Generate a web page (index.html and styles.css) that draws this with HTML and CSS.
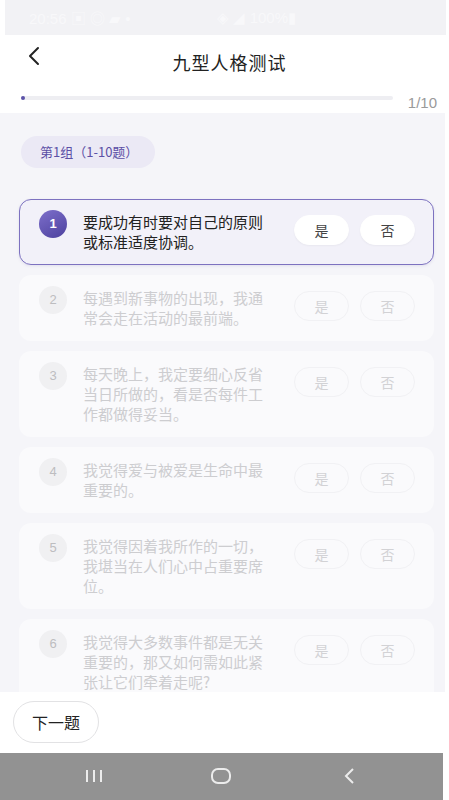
FILE: index.html
```html
<!DOCTYPE html>
<html lang="zh-CN">
<head>
    <meta charset="UTF-8" />
    <meta name="viewport" content="width=device-width, initial-scale=1.0" />
    <title>九型人格测试</title>
    <link rel="stylesheet" href="styles.css">
</head>
<body>
    <div class="status-bar">
        <span class="status-left">20:56 ▣ ◎ ▰ •</span>
        <span class="status-right">◈ ◢ 100%▮</span>
    </div>

    <div class="header">
        <svg class="back" width="14" height="20" viewBox="0 0 14 20">
            <path d="M11 2 L3 10 L11 18" fill="none" stroke="#222" stroke-width="2" stroke-linecap="round" stroke-linejoin="round"/>
        </svg>
        <h1>九型人格测试</h1>
    </div>

    <div class="progress-row">
        <div class="progress-track">
            <div class="progress-fill" style="width: 1%;"></div>
        </div>
        <span class="progress-text">1/10</span>
    </div>

    <div class="content">
        <div class="group-tag">第1组（1-10题）</div>

        <div class="question-list">
            <div class="q-card active">
                <div class="q-num">1</div>
                <div class="q-text">要成功有时要对自己的原则或标准适度协调。</div>
                <div class="q-answers">
                    <button class="ans">是</button>
                    <button class="ans">否</button>
                </div>
            </div>
            <div class="q-card">
                <div class="q-num">2</div>
                <div class="q-text">每遇到新事物的出现，我通常会走在活动的最前端。</div>
                <div class="q-answers">
                    <button class="ans">是</button>
                    <button class="ans">否</button>
                </div>
            </div>
            <div class="q-card">
                <div class="q-num">3</div>
                <div class="q-text">每天晚上，我定要细心反省当日所做的，看是否每件工作都做得妥当。</div>
                <div class="q-answers">
                    <button class="ans">是</button>
                    <button class="ans">否</button>
                </div>
            </div>
            <div class="q-card">
                <div class="q-num">4</div>
                <div class="q-text">我觉得爱与被爱是生命中最重要的。</div>
                <div class="q-answers">
                    <button class="ans">是</button>
                    <button class="ans">否</button>
                </div>
            </div>
            <div class="q-card">
                <div class="q-num">5</div>
                <div class="q-text">我觉得因着我所作的一切，我堪当在人们心中占重要席位。</div>
                <div class="q-answers">
                    <button class="ans">是</button>
                    <button class="ans">否</button>
                </div>
            </div>
            <div class="q-card">
                <div class="q-num">6</div>
                <div class="q-text">我觉得大多数事件都是无关重要的，那又如何需如此紧张让它们牵着走呢?</div>
                <div class="q-answers">
                    <button class="ans">是</button>
                    <button class="ans">否</button>
                </div>
            </div>
        </div>
    </div>

    <div class="footer">
        <button class="next-btn">下一题</button>
    </div>

    <div class="nav-bar">
        <svg width="20" height="16" viewBox="0 0 20 16">
            <path d="M3 2 V14 M10 2 V14 M17 2 V14" stroke="#ececec" stroke-width="2"/>
        </svg>
        <svg width="22" height="18" viewBox="0 0 22 18">
            <rect x="2" y="2" width="18" height="14" rx="6" fill="none" stroke="#ececec" stroke-width="2"/>
        </svg>
        <svg width="14" height="18" viewBox="0 0 14 18">
            <path d="M10 2 L3 9 L10 16" fill="none" stroke="#ececec" stroke-width="2"/>
        </svg>
    </div>
</body>
</html>
```

FILE: styles.css
```css
* {
    box-sizing: border-box;
}

body {
    margin: 0;
    width: 449px;
    height: 800px;
    overflow: hidden;
    background-color: #fff;
    font-family: "Noto Sans CJK SC", "Noto Sans", sans-serif;
    color: #222;
}

.status-bar {
    height: 35px;
    margin: 0 3px 0 5px;
    background-color: #f2f2f5;
    display: flex;
    align-items: center;
    justify-content: space-between;
    padding: 0 150px 0 24px;
    font-family: "Liberation Sans", sans-serif;
    font-size: 15px;
    color: #f8f8fa;
}

.header {
    height: 54px;
    position: relative;
    display: flex;
    align-items: center;
    justify-content: center;
}

.header .back {
    position: absolute;
    left: 27px;
    top: 11px;
}

.header h1 {
    margin: 0 0 0 10px;
    font-size: 18px;
    font-weight: 400;
    letter-spacing: 1px;
}

.progress-row {
    height: 24px;
    display: flex;
    align-items: flex-start;
    padding: 7px 12px 0 21px;
}

.progress-track {
    width: 372px;
    height: 4px;
    border-radius: 2px;
    background-color: #eeeef2;
}

.progress-fill {
    height: 100%;
    min-width: 4px;
    border-radius: 2px;
    background-color: #5b52a8;
}

.progress-text {
    margin-left: auto;
    margin-top: -1px;
    font-family: "Liberation Sans", sans-serif;
    font-size: 15px;
    line-height: 16px;
    color: #9a9a9a;
}

.content {
    height: 579px;
    overflow: hidden;
    margin-right: 4px;
    padding: 23px 11px 0 19px;
    background-color: #f5f5f9;
}

.group-tag {
    display: inline-block;
    height: 32px;
    line-height: 32px;
    padding: 0 17px 0 19px;
    margin-left: 2px;
    border-radius: 16px;
    background-color: #ebe9f5;
    color: #5c4fa6;
    font-size: 13px;
}

.question-list {
    margin-top: 31px;
    display: flex;
    flex-direction: column;
    gap: 10px;
}

.q-card {
    display: flex;
    align-items: flex-start;
    padding: 12px 18px 12px 19px;
    border: 1px solid transparent;
    border-radius: 12px;
    background-color: #fafafc;
    color: #cdcdd0;
}

.q-card.active {
    border: 1.5px solid #7d72c0;
    background-color: #f2f1f9;
    color: #222;
    box-shadow: 0 1px 3px rgba(90, 80, 160, 0.12);
}

.q-num {
    flex: none;
    width: 28px;
    height: 28px;
    margin-top: -2px;
    border-radius: 50%;
    background-color: #f0f0f2;
    color: #bdbdc0;
    font-family: "Liberation Sans", sans-serif;
    font-size: 13px;
    line-height: 28px;
    text-align: center;
}

.q-card.active .q-num {
    background: linear-gradient(150deg, #7d6fcb, #4d419e);
    color: #fff;
    font-weight: bold;
}

.q-text {
    width: 181px;
    margin-left: 16px;
    font-size: 15px;
    line-height: 20px;
}

.q-answers {
    margin-left: auto;
    margin-top: 3px;
    display: flex;
    gap: 11px;
}

.ans {
    width: 55px;
    height: 30px;
    border: 1px solid #f1f1f4;
    border-radius: 15px;
    background-color: #fafafc;
    color: #d2d2d5;
    font-family: "Noto Sans CJK SC", sans-serif;
    font-size: 14px;
    padding: 0;
}

.q-card.active .ans {
    border-color: #fff;
    background-color: #fff;
    color: #444;
    box-shadow: 0 1px 2px rgba(0, 0, 0, 0.04);
}

.footer {
    height: 61px;
    padding: 9px 0 0 13px;
    background-color: #fff;
}

.next-btn {
    width: 86px;
    height: 42px;
    border: 1px solid #e2e2e4;
    border-radius: 21px;
    background-color: #fff;
    color: #222;
    font-family: "Noto Sans CJK SC", sans-serif;
    font-size: 16px;
    padding: 0;
}

.nav-bar {
    height: 47px;
    margin-right: 6px;
    background-color: #929292;
    display: flex;
    align-items: center;
    padding: 0 0 2px 0;
}

.nav-bar svg:nth-child(1) {
    margin-left: 84px;
}

.nav-bar svg:nth-child(2) {
    margin-left: 106px;
}

.nav-bar svg:nth-child(3) {
    margin-left: 111px;
}
```
